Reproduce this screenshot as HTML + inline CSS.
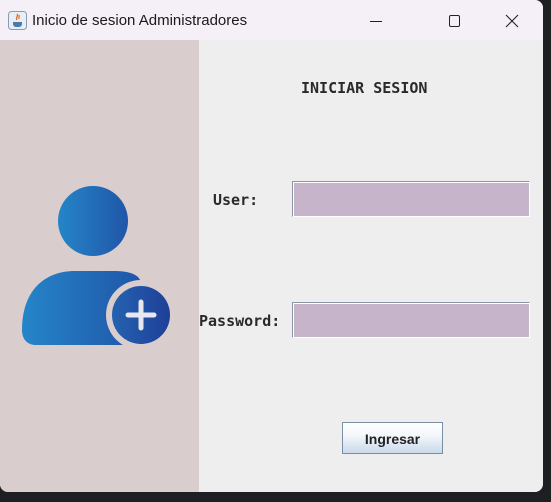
<!DOCTYPE html>
<html><head><meta charset="utf-8"><style>
*{margin:0;padding:0;box-sizing:border-box}
html,body{width:551px;height:502px;overflow:hidden;background:#1e1f22;font-family:"Liberation Sans",sans-serif}
.win{position:absolute;left:0;top:0;width:543px;height:492px;border-radius:0 8px 8px 8px;overflow:hidden;background:#eeeeee}
.title{position:absolute;left:0;top:0;width:543px;height:40px;background:#f5eff7}
.title .t{position:absolute;left:32px;top:12px;font-size:15px;color:#1a1a1a}
.left{position:absolute;left:0;top:40px;width:199px;height:452px;background:#d9cdcd}
.mono{font-family:"DejaVu Sans Mono",monospace;font-weight:bold;color:#2a2a2a;position:absolute;font-size:15px}
.field{position:absolute;left:292px;width:238px;height:36px;background:#c6b4cb;border:1px solid #8a96a4;border-right-color:#fff;border-bottom-color:#fff;box-shadow:inset 1px 1px 0 #fff}
.btn{position:absolute;left:342px;top:422px;width:101px;height:32px;border:1px solid #7a8ea4;background:linear-gradient(#ffffff,#f4f8fc 40%,#c9d9ea);font-weight:bold;font-size:14px;color:#222;text-align:center;line-height:32px}
</style></head><body>
<div class="win">
<div class="title">
<svg style="position:absolute;left:8px;top:11px" width="19" height="19" viewBox="0 0 19 19"><rect x="0.5" y="0.5" width="18" height="18" rx="3" fill="#e8eef5" stroke="#8a9bb0"/><path d="M5 11h9v2a3 3 0 0 1-3 3H8a3 3 0 0 1-3-3z" fill="#4a79b0"/><path d="M9 3c2 2-2 3 0 6M11 4c1 2-1 2 0 4" stroke="#e07020" stroke-width="1.3" fill="none"/></svg>
<div class="t">Inicio de sesion Administradores</div>
<svg style="position:absolute;left:370px;top:14px" width="160" height="14"><line x1="0" y1="7.5" x2="12" y2="7.5" stroke="#222" stroke-width="1"/><rect x="79.5" y="1.5" width="10" height="11" rx="1.5" fill="none" stroke="#222"/><path d="M136 1l12 12M148 1l-12 12" stroke="#222" stroke-width="1.1"/></svg>
</div>
<div class="left">
<svg style="position:absolute;left:0;top:0" width="199" height="452" viewBox="0 40 199 452">
<defs><linearGradient id="g" x1="0" x2="1"><stop offset="0" stop-color="#2585c8"/><stop offset="1" stop-color="#2056a8"/></linearGradient>
<linearGradient id="g2" x1="0" x2="1"><stop offset="0" stop-color="#2462b0"/><stop offset="1" stop-color="#1f3f98"/></linearGradient></defs>
<circle cx="93" cy="221" r="35" fill="url(#g)"/>
<path d="M22 330 C22 290 45 271 75 271 H115 C130 271 138 275 140 280 L140 345 H36 C28 345 22 340 22 330Z" fill="url(#g)"/>
<circle cx="141" cy="315" r="35" fill="#d9cdcd"/>
<circle cx="141" cy="315" r="29" fill="url(#g2)"/>
<path d="M128 315H154M141 302V328" stroke="#e8e6ee" stroke-width="5" stroke-linecap="round"/>
</svg>
</div>
<div class="mono" style="left:301px;top:79px">INICIAR SESION</div>
<div class="mono" style="left:213px;top:191px">User:</div>
<div class="field" style="top:181px"></div>
<div class="mono" style="left:199px;top:312px">Password:</div>
<div class="field" style="top:302px"></div>
<div class="btn">Ingresar</div>
</div>
</body></html>
